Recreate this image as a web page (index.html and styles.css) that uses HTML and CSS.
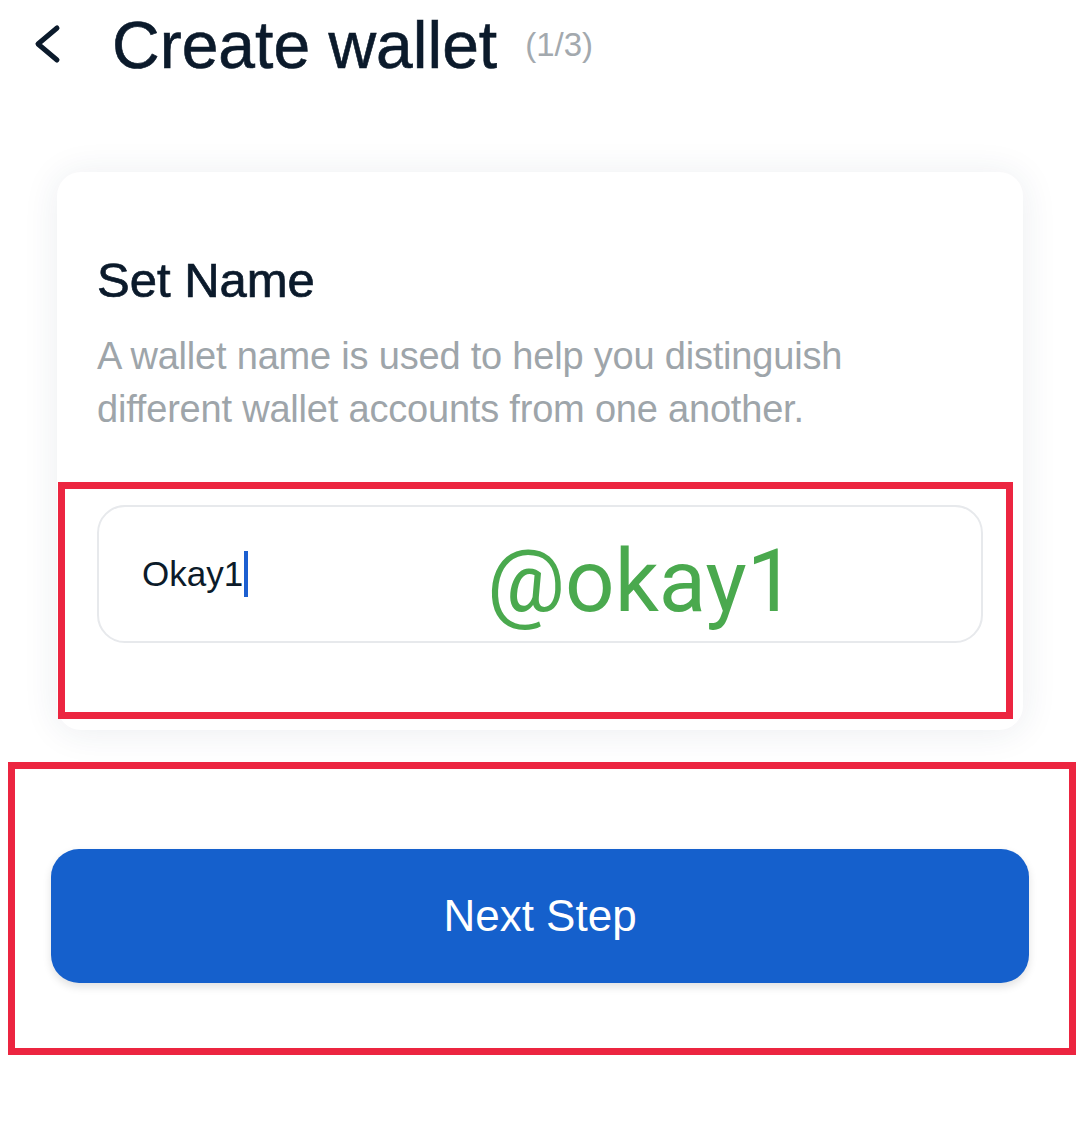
FILE: index.html
```html
<!DOCTYPE html>
<html lang="en">
<head>
<meta charset="utf-8">
<title>Create wallet</title>
<link rel="stylesheet" href="styles.css">
</head>
<body>
  <header class="header">
    <button class="back" aria-label="Back">
      <svg width="30" height="42" viewBox="0 0 30 42">
        <path d="M25 5 L6 21 L25 37" fill="none" stroke="#0b1a2b" stroke-width="5" stroke-linecap="round" stroke-linejoin="round"/>
      </svg>
    </button>
    <h1 class="title">Create wallet</h1>
    <span class="step">(1/3)</span>
  </header>

  <main class="card">
    <h2 class="card-title">Set Name</h2>
    <p class="card-desc">A wallet name is used to help you distinguish different wallet accounts from one another.</p>
    <div class="input">
      <span class="input-value">Okay1</span><span class="caret"></span>
      <span class="watermark">@okay1</span>
    </div>
    <div class="mark mark-input"></div>
  </main>

  <section class="actions">
    <button class="next">Next Step</button>
    <div class="mark mark-actions"></div>
  </section>
</body>
</html>
```

FILE: styles.css
```css
* { box-sizing: border-box; }

body {
  margin: 0;
  background: #ffffff;
  font-family: "Liberation Sans", Arial, sans-serif;
  color: #0b1a2b;
  width: 1080px;
  height: 1148px;
  overflow: hidden;
}

.header {
  display: flex;
  align-items: center;
  height: 90px;
  padding: 0 0 0 32px;
}

.back {
  border: 0;
  background: none;
  padding: 0;
  width: 30px;
  height: 42px;
  margin-top: -2px;
  display: flex;
}

.title {
  margin: 0 0 0 50px;
  font-size: 66px;
  font-weight: 400;
  line-height: 66px;
  color: #0b1a2b;
  -webkit-text-stroke: 0.6px #0b1a2b;
}

.step {
  margin-left: 28px;
  font-size: 33px;
  color: #a3a9ae;
  margin-top: 0;
}

.card {
  position: relative;
  margin: 82px 57px 0 57px;
  width: 966px;
  background: #ffffff;
  border-radius: 24px;
  box-shadow: 0 2px 36px rgba(30, 50, 90, 0.09);
  padding: 79px 40px 87px 40px;
}

.card-title {
  margin: 0;
  font-size: 49px;
  line-height: 58px;
  font-weight: 400;
  -webkit-text-stroke: 0.7px #0b1a2b;
  color: #0b1a2b;
}

.card-desc {
  margin: 21px 0 0 0;
  max-width: 780px;
  font-size: 38px;
  line-height: 53px;
  color: #9ea5aa;
  letter-spacing: -0.2px;
}

.input {
  position: relative;
  margin-top: 69px;
  height: 138px;
  border: 2px solid #e7e9ec;
  border-radius: 28px;
  display: flex;
  align-items: center;
  padding-left: 43px;
}

.input-value {
  font-size: 35px;
  color: #0c1b2a;
}

.caret {
  display: inline-block;
  width: 4px;
  height: 46px;
  background: #1c5fd0;
  margin-left: 1px;
}

.watermark {
  position: absolute;
  left: 388px;
  top: 24px;
  font-family: Roboto, "Liberation Sans", sans-serif;
  font-size: 87px;
  line-height: 100px;
  color: #4aa94e;
}

.mark {
  position: absolute;
  border: 7px solid #ec2540;
  pointer-events: none;
}

.mark-input {
  left: 1px;
  top: 310px;
  width: 955px;
  height: 237px;
}

.actions {
  position: relative;
  margin-top: 32px;
  padding: 87px 51px 0 51px;
  height: 293px;
}

.next {
  display: block;
  width: 100%;
  height: 134px;
  border: 0;
  border-radius: 28px;
  background: #1560cc;
  color: #ffffff;
  font-family: "Liberation Sans", Arial, sans-serif;
  font-size: 44px;
  box-shadow: 0 4px 8px rgba(0, 0, 0, 0.12);
}

.mark-actions {
  left: 8px;
  top: 0;
  width: 1068px;
  height: 293px;
}
```
